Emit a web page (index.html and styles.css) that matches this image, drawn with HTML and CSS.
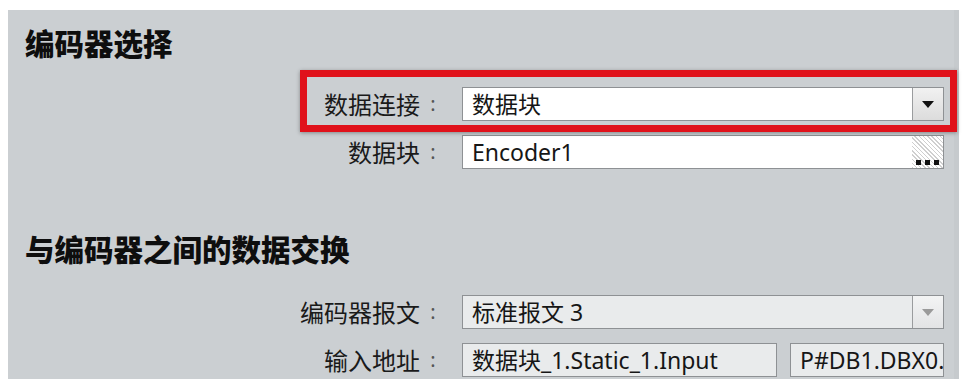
FILE: index.html
```html
<!DOCTYPE html>
<html lang="zh-CN">
<head>
<meta charset="utf-8">
<title>编码器选择</title>
<link rel="stylesheet" href="styles.css">
</head>
<body>
<div class="panel">
  <h2 class="title">编码器选择</h2>
  <div class="row row1">
    <span class="lbl">数据连接</span><span class="colon">:</span>
    <div class="field white">
      <span class="val">数据块</span>
      <span class="btn drop"><span class="tri"></span></span>
    </div>
  </div>
  <div class="row row2">
    <span class="lbl">数据块</span><span class="colon">:</span>
    <div class="field white">
      <span class="val">Encoder1</span>
      <span class="btn dots"><span class="dotrow"><i></i><i></i><i></i></span></span>
    </div>
  </div>
  <h2 class="title title2">与编码器之间的数据交换</h2>
  <div class="row row3">
    <span class="lbl">编码器报文</span><span class="colon">:</span>
    <div class="field grey">
      <span class="val">标准报文 3</span>
      <span class="btn drop dis"><span class="tri"></span></span>
    </div>
  </div>
  <div class="row row4">
    <span class="lbl">输入地址</span><span class="colon">:</span>
    <div class="pair">
      <div class="field grey f1"><span class="val">数据块_1.Static_1.Input</span></div>
      <div class="field grey f2"><span class="val">P#DB1.DBX0.0</span></div>
    </div>
  </div>
  <div class="mark"></div>
</div>
</body>
</html>
```
FILE: styles.css
```css
html, body {
  margin: 0;
  padding: 0;
  background: #ffffff;
  height: 379px;
  overflow: hidden;
}
body {
  padding: 10px 9px 0 8px;
  font-family: "Noto Sans", "Noto Sans CJK SC", sans-serif;
  color: #1c1c1c;
}
.panel {
  position: relative;
  background: #cbcfd2;
  height: 369px;
  padding: 14px 15px 0 0;
  box-sizing: border-box;
  box-shadow: inset -5px 0 0 #c6cacd;
}
.title {
  margin: 0;
  padding-left: 17px;
  font-family: "Noto Sans CJK SC", sans-serif;
  font-weight: 900;
  font-size: 29.5px;
  line-height: 36px;
  color: #0e0e0e;
}
.title2 {
  margin-top: 61px;
}
.row {
  display: flex;
  align-items: center;
  height: 34px;
}
.row1 { margin-top: 27px; }
.row2 { margin-top: 14px; }
.row3 { margin-top: 29px; }
.row4 { margin-top: 14px; }
.lbl {
  flex: none;
  width: 412px;
  text-align: right;
  font-family: "Noto Sans CJK SC", sans-serif;
  font-size: 24px;
  line-height: 34px;
  color: #1a1a1a;
}
.colon {
  flex: none;
  width: 22px;
  text-align: center;
  font-size: 20px;
  line-height: 34px;
  color: #555;
  margin-left: 2px;
}
.field {
  margin-left: 18px;
  flex: 1;
  min-width: 0;
  height: 34px;
  box-sizing: border-box;
  border: 1px solid #8e9194;
  display: flex;
  align-items: center;
  position: relative;
  overflow: hidden;
}
.white { background: #ffffff; }
.grey { background: #e9ebec; }
.val {
  padding-left: 9px;
  font-size: 23px;
  line-height: 32px;
  white-space: nowrap;
  flex: 1;
  min-width: 0;
  font-family: "Noto Sans", "Noto Sans CJK SC", sans-serif;
  color: #161616;
}
.btn {
  width: 31px;
  height: 32px;
  box-sizing: border-box;
  border-left: 1px solid #9a9c9e;
  background: linear-gradient(#f1f1f1, #dcdcdc);
  display: flex;
  align-items: center;
  justify-content: center;
  flex: none;
}
.tri {
  width: 0;
  height: 0;
  border-left: 6px solid transparent;
  border-right: 6px solid transparent;
  border-top: 7px solid #111;
}
.dis .tri { border-top-color: #9a9a9a; }
.dis { background: linear-gradient(#f3f4f4, #e3e4e5); }
.dots {
  border-left: none;
  background:
    repeating-linear-gradient(45deg, #cfcfcf 0 1px, #ffffff 1px 3px);
  align-items: flex-end;
  padding-bottom: 3px;
}
.dotrow {
  display: flex;
  gap: 4px;
}
.dotrow i {
  display: block;
  width: 5px;
  height: 5px;
  background: #111;
}
.pair {
  margin-left: 18px;
  flex: 1;
  min-width: 0;
  display: flex;
  gap: 13px;
}
.pair .field { margin-left: 0; }
.f1 { flex: none; width: 315px; }
.f2 { flex: 1; min-width: 0; }
.mark {
  position: absolute;
  left: 292px;
  top: 60px;
  width: 657px;
  height: 62px;
  box-sizing: border-box;
  border: 7px solid #e0121b;
  box-shadow: 0 1px 4px rgba(0,0,0,0.35);
}
```
